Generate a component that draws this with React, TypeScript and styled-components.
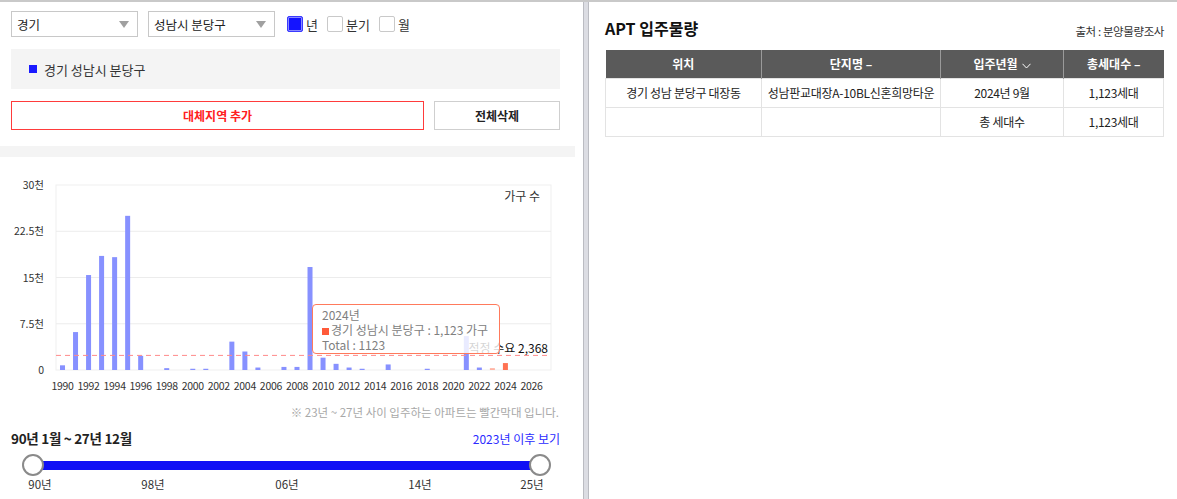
import React from "react";
import styled, { createGlobalStyle } from "styled-components";

const Global = createGlobalStyle`
  html, body { margin: 0; padding: 0; background: #fff; }
  body { font-family: "Noto Sans CJK KR", "Noto Sans", sans-serif; color: #333; }
  * { box-sizing: border-box; }
`;

const Page = styled.div`
  display: flex;
  width: 1177px;
  height: 499px;
  border-top: 2px solid #c9c9c9;
  overflow: hidden;
`;

const Left = styled.div`
  width: 583px;
  flex: none;
  padding-top: 9px;
  display: flex;
  flex-direction: column;
`;

const Divider = styled.div`
  width: 6px;
  flex: none;
  background: #dcdde3;
  border-left: 1px solid #bbbcc2;
  border-right: 1px solid #bbbcc2;
`;

const Right = styled.div`
  flex: 1;
  padding: 13px 14px 0 16px;
`;

const Controls = styled.div`
  display: flex;
  align-items: center;
  padding-left: 11px;
  gap: 10px;
  height: 26px;
`;

const Select = styled.div`
  width: 127px;
  height: 26px;
  border: 1px solid #c8c8c8;
  display: flex;
  align-items: center;
  justify-content: space-between;
  padding: 0 8px 0 5px;
  font-size: 12.5px;
  color: #222;
`;

const Caret = styled.span`
  width: 0;
  height: 0;
  border-left: 5px solid transparent;
  border-right: 5px solid transparent;
  border-top: 7px solid #a0a0a0;
`;

const Checks = styled.div`
  display: flex;
  align-items: center;
  margin-left: 2px;
`;

const CheckItem = styled.label`
  display: flex;
  align-items: center;
  gap: 3px;
  font-size: 13px;
  color: #333;
  margin-right: 9px;
`;

const Box = styled.span<{ $on?: boolean }>`
  width: 16px;
  height: 16px;
  border-radius: 2px;
  border: 1px solid ${(p) => (p.$on ? "#3a3aff" : "#c9c9c9")};
  background: ${(p) => (p.$on ? "#1414ff" : "#fff")};
  box-shadow: ${(p) => (p.$on ? "inset 0 0 0 1px #8a8aff" : "none")};
`;

const RegionBox = styled.div`
  margin: 12px 23px 0 11px;
  height: 40px;
  background: #f4f4f4;
  display: flex;
  align-items: center;
  padding-left: 18px;
  gap: 7px;
  font-size: 13px;
  color: #333;
`;

const Square = styled.span<{ $c: string }>`
  width: 8px;
  height: 8px;
  background: ${(p) => p.$c};
`;

const Buttons = styled.div`
  display: flex;
  gap: 10px;
  margin: 12px 23px 0 11px;
`;

const Btn = styled.div<{ $red?: boolean }>`
  height: 29px;
  display: flex;
  align-items: center;
  justify-content: center;
  font-size: 12px;
  flex: ${(p) => (p.$red ? "1" : "none")};
  width: ${(p) => (p.$red ? "auto" : "126px")};
  border: 1px solid ${(p) => (p.$red ? "#ff3b3b" : "#cfcfcf")};
  color: ${(p) => (p.$red ? "#ff2020" : "#222")};
  font-weight: 700;
`;

const Strip = styled.div`
  margin-top: 16px;
  width: 575px;
  height: 11px;
  background: #f4f4f4;
`;

const ChartWrap = styled.div`
  position: relative;
  width: 575px;
  height: 240px;
`;

const Tooltip = styled.div`
  position: absolute;
  left: 312px;
  top: 147px;
  width: 188px;
  height: 50px;
  border: 1px solid #ff7a5c;
  border-radius: 4px;
  background: rgba(255, 255, 255, 0.82);
  padding: 2px 9px 0;
  font-size: 12px;
  line-height: 15px;
  color: #808080;
  white-space: nowrap;
`;

const TipSq = styled.span`
  display: inline-block;
  width: 7px;
  height: 7px;
  background: #ff5a3a;
  margin-right: 2px;
`;

const Note = styled.div`
  margin-top: 8px;
  padding-right: 24px;
  text-align: right;
  font-size: 11.5px;
  color: #a8a8a8;
  line-height: 14px;
`;

const RangeRow = styled.div`
  display: flex;
  justify-content: space-between;
  align-items: center;
  margin: 9px 23px 0 11px;
  height: 20px;
`;

const RangeLabel = styled.span`
  font-size: 13.5px;
  font-weight: 700;
  color: #222;
  letter-spacing: -0.3px;
`;

const RangeLink = styled.span`
  font-size: 12px;
  color: #2b2bff;
`;

const Slider = styled.div`
  position: relative;
  margin: 6px 0 0 33px;
  width: 507px;
  height: 22px;
  display: flex;
  align-items: center;
`;

const Track = styled.div`
  width: 100%;
  height: 9px;
  background: #1010f5;
`;

const Handle = styled.span<{ $right?: boolean }>`
  position: absolute;
  top: 0;
  ${(p) => (p.$right ? "right: -11px;" : "left: -11px;")}
  width: 22px;
  height: 22px;
  border-radius: 50%;
  background: #fff;
  border: 2px solid #8a8a8a;
`;

const Scale = styled.div`
  position: relative;
  height: 18px;
  margin-top: 0;
`;

const Tick = styled.span`
  position: absolute;
  top: 0;
  transform: translateX(-50%);
  font-size: 11.5px;
  color: #333;
`;

const TitleRow = styled.div`
  display: flex;
  justify-content: space-between;
  align-items: flex-end;
  height: 24px;
`;

const Title = styled.h2`
  margin: 0;
  font-size: 16px;
  font-weight: 700;
  color: #111;
  line-height: 22px;
`;

const Source = styled.span`
  font-size: 11.5px;
  color: #333;
  letter-spacing: -0.4px;
  line-height: 16px;
`;

const Table = styled.table`
  margin-top: 11px;
  width: 558px;
  border-collapse: collapse;
  table-layout: fixed;
  font-size: 12px;
`;

const Th = styled.th`
  background: #5a5a5a;
  color: #fff;
  font-weight: 700;
  height: 28px;
  padding: 0;
  border-left: 1px solid #9a9a9a;
  &:first-child { border-left: none; }
`;

const Td = styled.td`
  height: 29px;
  padding: 0;
  text-align: center;
  color: #222;
  border: 1px solid #e3e3e3;
  letter-spacing: -0.3px;
`;

const Chevron = () => (
  <svg width="9" height="6" viewBox="0 0 9 6" style={{ marginLeft: 4, verticalAlign: "middle" }}>
    <path d="M0.5 0.8 L4.5 5 L8.5 0.8" fill="none" stroke="#fff" strokeWidth="1" />
  </svg>
);

const bars: [number, number][] = [
  [1990, 760], [1991, 6150], [1992, 15400], [1993, 18500], [1994, 18300], [1995, 25000],
  [1996, 2300], [1998, 300], [2000, 200], [2001, 200], [2003, 4600], [2004, 3000],
  [2005, 400], [2007, 500], [2008, 500], [2009, 16700], [2010, 2000], [2011, 1000],
  [2012, 400], [2013, 200], [2015, 900], [2018, 200], [2021, 5500], [2022, 400],
  [2023, 300], [2024, 1123],
];

const X0 = 56, X1 = 551, Y0 = 184, Y1 = 369;
const cat = (X1 - X0) / 38;
const cx = (y: number) => X0 + cat * (y - 1990 + 0.5);
const yv = (v: number) => Y1 - (v / 30000) * (Y1 - Y0);

const Chart = () => (
  <svg width="575" height="240" viewBox="0 156 575 240" style={{ display: "block" }}>
    <rect x={X0} y={Y0} width={X1 - X0} height={Y1 - Y0} fill="none" stroke="#efefef" />
    {[7500, 15000, 22500].map((v) => (
      <line key={v} x1={X0} x2={X1} y1={yv(v)} y2={yv(v)} stroke="#ececec" />
    ))}
    {[["30천", 30000], ["22.5천", 22500], ["15천", 15000], ["7.5천", 7500], ["0", 0]].map(([t, v]) => (
      <text key={t as string} x={44} y={yv(v as number) + 4} textAnchor="end" fontSize="10.5" fill="#333">
        {t}
      </text>
    ))}
    {bars.map(([yr, v]) => {
      const fill = yr === 2024 ? "#ff7252" : yr === 2023 ? "#ffb3a3" : "#8791ff";
      return <rect key={yr} x={cx(yr) - 2.5} y={yv(v)} width={5} height={Y1 - yv(v)} fill={fill} />;
    })}
    <line x1={X0} x2={X1} y1={yv(2368)} y2={yv(2368)} stroke="#ff8a8a" strokeDasharray="5 4" />
    <text x={548} y={352} textAnchor="end" fontSize="12" fill="#111">적정 수요 2,368</text>
    <text x={540} y={200} textAnchor="end" fontSize="12" fill="#333">가구 수</text>
    {Array.from({ length: 19 }, (_, i) => 1990 + i * 2).map((yr) => (
      <text key={yr} x={cx(yr)} y={389} textAnchor="middle" fontSize="10.5" letterSpacing="-0.3" fill="#333">
        {yr}
      </text>
    ))}
  </svg>
);

const ticks: [string, number][] = [["90년", 7], ["98년", 120], ["06년", 254], ["14년", 387], ["25년", 499]];

export default function App() {
  return (
    <>
      <Global />
      <Page>
        <Left>
          <Controls>
            <Select>경기<Caret /></Select>
            <Select>성남시 분당구<Caret /></Select>
            <Checks>
              <CheckItem><Box $on />년</CheckItem>
              <CheckItem><Box />분기</CheckItem>
              <CheckItem><Box />월</CheckItem>
            </Checks>
          </Controls>
          <RegionBox>
            <Square $c="#1a1aff" />
            경기 성남시 분당구
          </RegionBox>
          <Buttons>
            <Btn $red>대체지역 추가</Btn>
            <Btn>전체삭제</Btn>
          </Buttons>
          <Strip />
          <ChartWrap>
            <Chart />
            <Tooltip>
              <div>2024년</div>
              <div><TipSq />경기 성남시 분당구 : 1,123 가구</div>
              <div>Total : 1123</div>
            </Tooltip>
          </ChartWrap>
          <Note>※ 23년 ~ 27년 사이 입주하는 아파트는 빨간막대 입니다.</Note>
          <RangeRow>
            <RangeLabel>90년 1월 ~ 27년 12월</RangeLabel>
            <RangeLink>2023년 이후 보기</RangeLink>
          </RangeRow>
          <Slider>
            <Track />
            <Handle />
            <Handle $right />
          </Slider>
          <Scale>
            {ticks.map(([t, x]) => (
              <Tick key={t} style={{ left: 33 + x }}>{t}</Tick>
            ))}
          </Scale>
        </Left>
        <Divider />
        <Right>
          <TitleRow>
            <Title>APT 입주물량</Title>
            <Source>출처 : 분양물량조사</Source>
          </TitleRow>
          <Table>
            <colgroup>
              <col style={{ width: 156 }} />
              <col style={{ width: 179 }} />
              <col style={{ width: 123 }} />
              <col style={{ width: 100 }} />
            </colgroup>
            <thead>
              <tr>
                <Th>위치</Th>
                <Th>단지명 –</Th>
                <Th>입주년월<Chevron /></Th>
                <Th>총세대수 –</Th>
              </tr>
            </thead>
            <tbody>
              <tr>
                <Td>경기 성남 분당구 대장동</Td>
                <Td>성남판교대장A-10BL신혼희망타운</Td>
                <Td>2024년 9월</Td>
                <Td>1,123세대</Td>
              </tr>
              <tr>
                <Td />
                <Td />
                <Td>총 세대수</Td>
                <Td>1,123세대</Td>
              </tr>
            </tbody>
          </Table>
        </Right>
      </Page>
    </>
  );
}
